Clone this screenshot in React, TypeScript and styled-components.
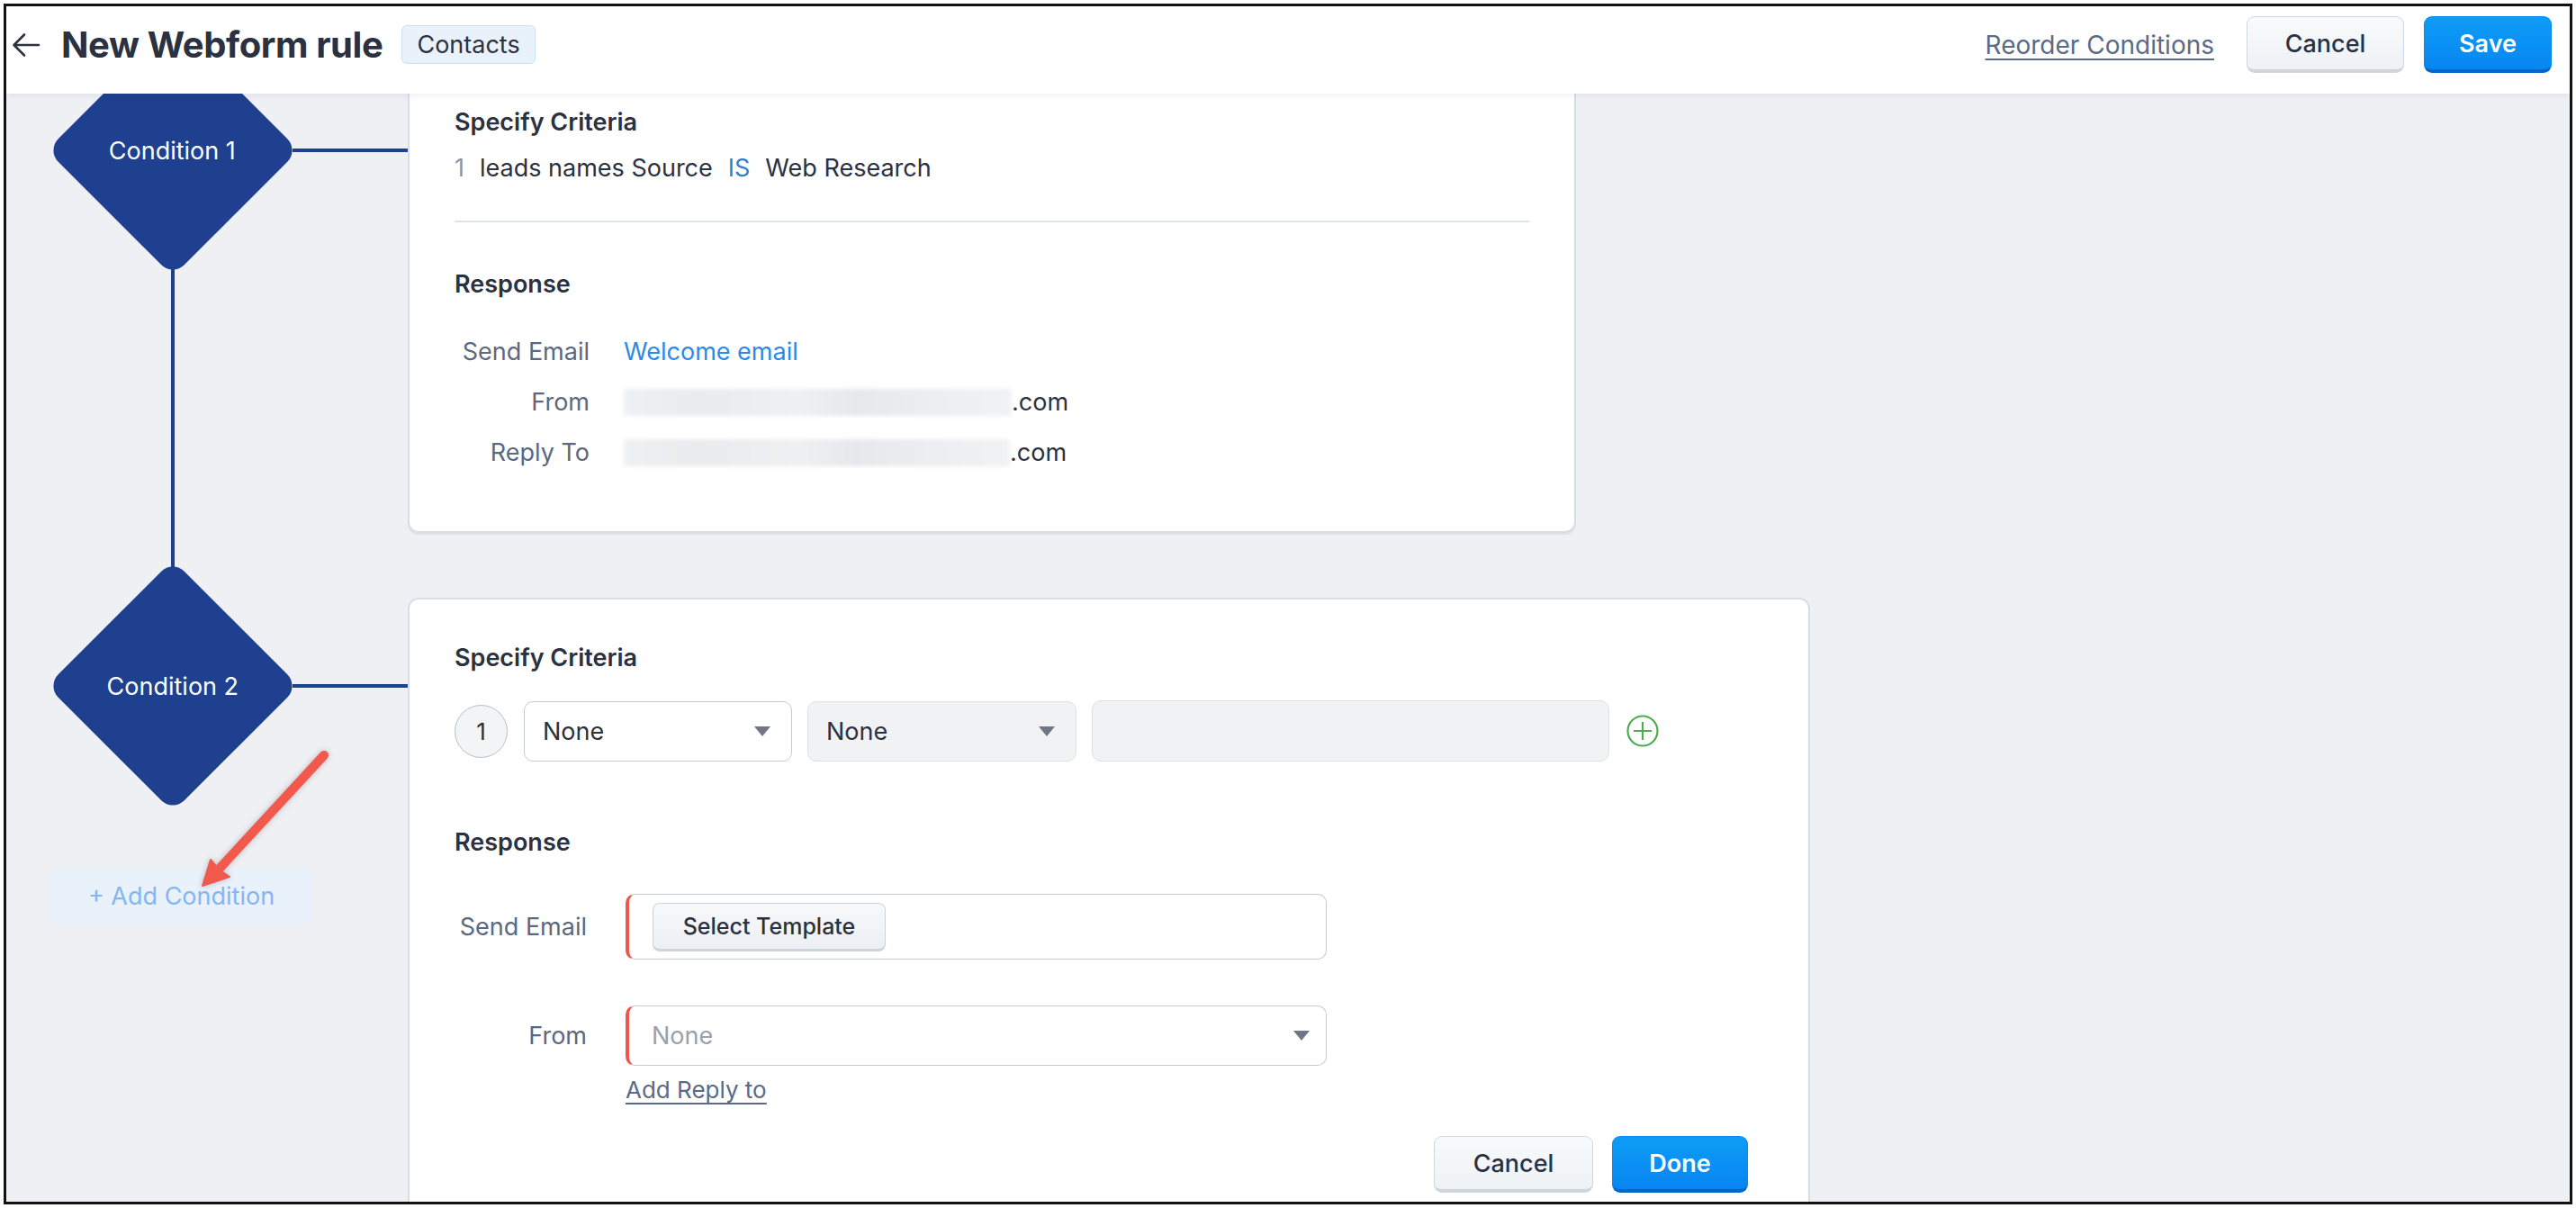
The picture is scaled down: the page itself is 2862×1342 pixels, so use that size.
import React from "react";
import styled, { createGlobalStyle } from "styled-components";

const GlobalStyle = createGlobalStyle`
  html, body {
    margin: 0;
    padding: 0;
    background: #ffffff;
    font-family: "Inter", "Lato", "Noto Sans", "Liberation Sans", sans-serif;
    color: #2b3140;
  }
  * { box-sizing: border-box; }
`;

const NAVY = "#1f3f8f";

const Root = styled.div`
  width: 2862px;
  height: 1342px;
  padding: 4px;
`;

const Frame = styled.div`
  position: relative;
  width: 100%;
  height: 100%;
  border: 3px solid #111214;
  display: flex;
  flex-direction: column;
  overflow: hidden;
`;

const Header = styled.header`
  position: relative;
  z-index: 2;
  flex-shrink: 0;
  height: 97px;
  background: #ffffff;
  display: flex;
  align-items: center;
  padding: 0 20px 12px 6px;
  box-shadow: 0 3px 7px rgba(30, 40, 60, 0.06);
`;

const BackButton = styled.button`
  width: 32px;
  height: 32px;
  padding: 0;
  border: none;
  background: transparent;
  display: flex;
  align-items: center;
  justify-content: center;
  margin-right: 23px;
`;

const Title = styled.h1`
  margin: 0;
  font-size: 40px;
  font-weight: 700;
  color: #2b3140;
  letter-spacing: -0.4px;
  line-height: 48px;
`;

const ModuleBadge = styled.span`
  margin-left: 21px;
  height: 43px;
  padding: 0 16px;
  display: inline-flex;
  align-items: center;
  background: #e9f1fb;
  border: 1.5px solid #cfdff2;
  border-radius: 6px;
  font-size: 27px;
  color: #2b3140;
`;

const HeaderRight = styled.div`
  margin-left: auto;
  display: flex;
  align-items: center;
`;

const TextLink = styled.a<{ $size?: number }>`
  font-size: ${(p) => p.$size ?? 28}px;
  color: #5b6a86;
  text-decoration: underline;
  text-underline-offset: 5px;
  text-decoration-thickness: 2px;
  cursor: pointer;
`;

const Button = styled.button<{ $primary?: boolean; $w: number }>`
  width: ${(p) => p.$w}px;
  height: 63px;
  border-radius: 9px;
  font-family: inherit;
  font-size: 27px;
  font-weight: ${(p) => (p.$primary ? 600 : 500)};
  color: ${(p) => (p.$primary ? "#ffffff" : "#2b3140")};
  background: ${(p) =>
    p.$primary
      ? "linear-gradient(180deg, #0d9cf6 0%, #0886f2 100%)"
      : "linear-gradient(180deg, #f9fafc 0%, #eef1f5 100%)"};
  border: 1.5px solid ${(p) => (p.$primary ? "#0a86ee" : "#d0d6df")};
  border-bottom: 4px solid ${(p) => (p.$primary ? "#0566c8" : "#cfd5de")};
  cursor: pointer;
`;

const Body = styled.main`
  flex: 1;
  background: #eef0f4;
  overflow: hidden;
`;

const Canvas = styled.div`
  margin-top: -35px;
  padding-left: 52px;
  display: flex;
  flex-direction: column;
  gap: 72px;
`;

const ConditionRow = styled.div`
  display: flex;
  align-items: stretch;
`;

const NodeColumn = styled.div`
  width: 266px;
  flex-shrink: 0;
  display: flex;
  flex-direction: column;
  align-items: center;
`;

const DiamondBox = styled.div`
  width: 266px;
  height: 266px;
  margin-top: -35px;
  flex-shrink: 0;
  display: flex;
  align-items: center;
  justify-content: center;
`;

const DiamondShape = styled.div`
  width: 198px;
  height: 198px;
  border-radius: 18px;
  background: ${NAVY};
  transform: rotate(45deg);
  display: flex;
  align-items: center;
  justify-content: center;
`;

const DiamondLabel = styled.span`
  transform: rotate(-45deg);
  color: #ffffff;
  font-size: 27px;
  white-space: nowrap;
`;

const VLine = styled.div`
  flex: 1;
  width: 4px;
  margin-top: -4px;
  margin-bottom: -41px;
  background: ${NAVY};
`;

const HLine = styled.div`
  width: 128px;
  height: 4px;
  margin-top: 96px;
  flex-shrink: 0;
  background: ${NAVY};
`;

const AddConditionButton = styled.button`
  align-self: flex-start;
  margin-left: -3px;
  margin-top: 68px;
  width: 291px;
  height: 65px;
  flex-shrink: 0;
  border: none;
  border-radius: 10px;
  background: #e9f1fb;
  color: #86b6f2;
  font-family: inherit;
  font-size: 27px;
  cursor: pointer;
`;

const Card = styled.section<{ $w: number }>`
  width: ${(p) => p.$w}px;
  flex-shrink: 0;
  background: #ffffff;
  border: 2px solid #d8dee6;
  border-radius: 12px;
  box-shadow: 0 2px 0 #dde2e9;
  padding: 49px 50px 70px 50px;
  display: flex;
  flex-direction: column;
`;

const SectionTitle = styled.h3<{ $mt?: number }>`
  margin: ${(p) => p.$mt ?? 0}px 0 0 0;
  font-size: 27px;
  line-height: 32px;
  font-weight: 600;
  color: #2b3140;
`;

const CriteriaLine = styled.div`
  margin-top: 18px;
  display: flex;
  gap: 17px;
  font-size: 27px;
  line-height: 34px;
`;

const Token = styled.span<{ $tone?: "muted" | "op" }>`
  color: ${(p) =>
    p.$tone === "muted" ? "#8a94a6" : p.$tone === "op" ? "#2f80d1" : "#2b3140"};
`;

const Divider = styled.hr`
  margin: 41px 0 0 0;
  border: none;
  height: 2px;
  background: #dbe3ec;
`;

const InfoList = styled.div`
  margin-top: 42px;
  display: flex;
  flex-direction: column;
  gap: 22px;
`;

const InfoRow = styled.div`
  display: flex;
  align-items: center;
  gap: 38px;
  font-size: 27px;
  line-height: 34px;
`;

const InfoLabel = styled.span<{ $w?: number }>`
  width: ${(p) => p.$w ?? 150}px;
  flex-shrink: 0;
  text-align: right;
  color: #5b6880;
`;

const InfoValue = styled.span<{ $link?: boolean }>`
  display: inline-flex;
  align-items: center;
  color: ${(p) => (p.$link ? "#2a8ae8" : "#2b3140")};
`;

const Redacted = styled.span<{ $w: number }>`
  display: inline-block;
  width: ${(p) => p.$w}px;
  height: 30px;
  background: linear-gradient(
    90deg,
    #eff0f2 0%,
    #e9ebee 20%,
    #eef0f2 45%,
    #e6e8ec 60%,
    #eceef1 80%,
    #f1f2f4 100%
  );
  filter: blur(2px);
`;

const CriteriaEditor = styled.div`
  margin-top: 31px;
  height: 68px;
  display: flex;
  align-items: center;
`;

const IndexBubble = styled.span`
  width: 59px;
  height: 59px;
  border-radius: 50%;
  border: 1.5px solid #b8bec8;
  background: #f3f4f6;
  display: flex;
  align-items: center;
  justify-content: center;
  font-size: 26px;
  color: #2b3140;
  flex-shrink: 0;
  margin-right: 18px;
`;

const SelectBox = styled.div<{ $w: number; $h?: number; $disabled?: boolean; $required?: boolean; $pl?: number }>`
  width: ${(p) => p.$w}px;
  height: ${(p) => p.$h ?? 67}px;
  flex-shrink: 0;
  display: flex;
  align-items: center;
  padding: 0 ${(p) => (p.$required ? 18 : 23)}px 0 ${(p) => p.$pl ?? 20}px;
  border-radius: 10px;
  border: 1.5px solid ${(p) => (p.$disabled ? "#dde0e5" : "#c6cbd3")};
  border-left: ${(p) => (p.$required ? "4px solid #f0564a" : undefined)};
  background: ${(p) => (p.$disabled ? "#f1f2f4" : "#ffffff")};
  font-size: 27px;
`;

const SelectText = styled.span<{ $placeholder?: boolean }>`
  flex: 1;
  color: ${(p) => (p.$placeholder ? "#9aa1ac" : "#2b3140")};
`;

const Caret = styled.span`
  width: 0;
  height: 0;
  border-left: 9px solid transparent;
  border-right: 9px solid transparent;
  border-top: 11px solid #6f7786;
`;

const ValueInput = styled.div`
  width: 575px;
  height: 68px;
  flex-shrink: 0;
  border-radius: 10px;
  border: 1.5px solid #dde0e5;
  background: #f1f2f4;
`;

const AddIcon = styled.button`
  margin-left: 19px;
  padding: 0;
  border: none;
  background: transparent;
  display: flex;
`;

const FormList = styled.div`
  margin-top: 41px;
  display: flex;
  flex-direction: column;
`;

const FormRow = styled.div<{ $mt?: number }>`
  margin-top: ${(p) => p.$mt ?? 0}px;
  display: flex;
  align-items: center;
  gap: 43px;
  font-size: 27px;
`;

const FieldBox = styled.div`
  width: 779px;
  height: 73px;
  display: flex;
  align-items: center;
  padding-left: 26px;
  border-radius: 10px;
  border: 1.5px solid #c6cbd3;
  border-left: 4px solid #f0564a;
  background: #ffffff;
`;

const TemplateButton = styled.button`
  width: 259px;
  height: 54px;
  border-radius: 8px;
  border: 1.5px solid #cdd3dc;
  border-bottom: 3px solid #cdd3dc;
  background: linear-gradient(180deg, #f8f9fb 0%, #eceff3 100%);
  font-family: inherit;
  font-size: 25px;
  font-weight: 500;
  color: #2b3140;
  cursor: pointer;
`;

const ReplyLink = styled.div`
  margin-top: 11px;
  padding-left: 190px;
  line-height: 32px;
`;

const ActionRow = styled.div`
  margin-top: 32px;
  display: flex;
  justify-content: flex-end;
  gap: 21px;
  padding-right: 17px;
`;

const Annotation = styled.svg`
  position: absolute;
  left: 193px;
  top: 808px;
  z-index: 3;
  overflow: visible;
  filter: drop-shadow(0 0 3px rgba(60, 40, 40, 0.28));
`;

const BackArrow = () => (
  <svg width="32" height="30" viewBox="0 0 32 30" fill="none">
    <path
      d="M30 15H3M14 3.5L2.5 15L14 26.5"
      stroke="#2d3340"
      strokeWidth="2.6"
      strokeLinecap="round"
      strokeLinejoin="round"
    />
  </svg>
);

const PlusCircle = () => (
  <svg width="36" height="36" viewBox="0 0 36 36" fill="none">
    <circle cx="18" cy="18" r="16.5" stroke="#4cae4f" strokeWidth="2.2" />
    <path d="M18 8V28M8 18H28" stroke="#4cae4f" strokeWidth="2.2" />
  </svg>
);

export default function App() {
  return (
    <>
      <GlobalStyle />
      <Root>
        <Frame>
          <Header>
            <BackButton aria-label="Back">
              <BackArrow />
            </BackButton>
            <Title>New Webform rule</Title>
            <ModuleBadge>Contacts</ModuleBadge>
            <HeaderRight>
              <TextLink>Reorder Conditions</TextLink>
              <Button $w={175} style={{ marginLeft: 36 }}>
                Cancel
              </Button>
              <Button $primary $w={142} style={{ marginLeft: 22 }}>
                Save
              </Button>
            </HeaderRight>
          </Header>

          <Body>
            <Canvas>
              <ConditionRow>
                <NodeColumn>
                  <DiamondBox>
                    <DiamondShape>
                      <DiamondLabel>Condition 1</DiamondLabel>
                    </DiamondShape>
                  </DiamondBox>
                  <VLine />
                </NodeColumn>
                <HLine />
                <Card $w={1298}>
                  <SectionTitle>Specify Criteria</SectionTitle>
                  <CriteriaLine>
                    <Token $tone="muted">1</Token>
                    <Token>leads names Source</Token>
                    <Token $tone="op">IS</Token>
                    <Token>Web Research</Token>
                  </CriteriaLine>
                  <Divider />
                  <SectionTitle $mt={53}>Response</SectionTitle>
                  <InfoList>
                    <InfoRow>
                      <InfoLabel>Send Email</InfoLabel>
                      <InfoValue $link>Welcome email</InfoValue>
                    </InfoRow>
                    <InfoRow>
                      <InfoLabel>From</InfoLabel>
                      <InfoValue>
                        <Redacted $w={431} />
                        .com
                      </InfoValue>
                    </InfoRow>
                    <InfoRow>
                      <InfoLabel>Reply To</InfoLabel>
                      <InfoValue>
                        <Redacted $w={429} />
                        .com
                      </InfoValue>
                    </InfoRow>
                  </InfoList>
                </Card>
              </ConditionRow>

              <ConditionRow>
                <NodeColumn>
                  <DiamondBox>
                    <DiamondShape>
                      <DiamondLabel>Condition 2</DiamondLabel>
                    </DiamondShape>
                  </DiamondBox>
                  <AddConditionButton>+ Add Condition</AddConditionButton>
                </NodeColumn>
                <HLine />
                <Card $w={1558}>
                  <SectionTitle>Specify Criteria</SectionTitle>
                  <CriteriaEditor>
                    <IndexBubble>1</IndexBubble>
                    <SelectBox $w={298}>
                      <SelectText>None</SelectText>
                      <Caret />
                    </SelectBox>
                    <SelectBox $w={299} $disabled style={{ marginLeft: 17 }}>
                      <SelectText>None</SelectText>
                      <Caret />
                    </SelectBox>
                    <ValueInput style={{ marginLeft: 17 }} />
                    <AddIcon aria-label="Add criteria">
                      <PlusCircle />
                    </AddIcon>
                  </CriteriaEditor>
                  <SectionTitle $mt={74}>Response</SectionTitle>
                  <FormList>
                    <FormRow>
                      <InfoLabel $w={147}>Send Email</InfoLabel>
                      <FieldBox>
                        <TemplateButton>Select Template</TemplateButton>
                      </FieldBox>
                    </FormRow>
                    <FormRow $mt={51}>
                      <InfoLabel $w={147}>From</InfoLabel>
                      <SelectBox $w={779} $required $pl={25}>
                        <SelectText $placeholder>None</SelectText>
                        <Caret />
                      </SelectBox>
                    </FormRow>
                  </FormList>
                  <ReplyLink>
                    <TextLink $size={26}>Add Reply to</TextLink>
                  </ReplyLink>
                  <ActionRow>
                    <Button $w={177}>Cancel</Button>
                    <Button $primary $w={151}>
                      Done
                    </Button>
                  </ActionRow>
                </Card>
              </ConditionRow>
            </Canvas>
          </Body>

          <Annotation width="170" height="180" viewBox="0 0 170 180">
            <path
              d="M160 24L40 154"
              stroke="#f2594d"
              strokeWidth="10"
              strokeLinecap="round"
            />
            <path d="M25 169L34 140L43 151L55 159Z" fill="#f2594d" stroke="#f2594d" strokeWidth="2" strokeLinejoin="round" />
          </Annotation>
        </Frame>
      </Root>
    </>
  );
}
